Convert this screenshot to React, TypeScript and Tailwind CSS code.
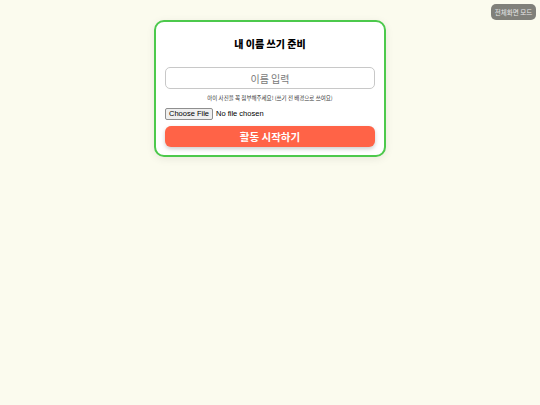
export default function App() {
  return (
    <div
      className="relative min-h-[405px] w-full bg-[#fbfbee] pt-[20px]"
      style={{ fontFamily: '"Noto Sans CJK KR", "Noto Sans", sans-serif' }}
    >
      <button className="absolute right-[4px] top-[4px] h-[16px] w-[45px] rounded-[5px] bg-[#80807a] text-[6.5px] leading-[9px] text-[#e8e8e8]">
        전체화면 모드
      </button>

      <div className="mx-auto w-[232px] rounded-[10px] border-2 border-[#4cc94c] bg-white px-[9px] pb-[8px] pt-[15px] shadow-[0_2px_8px_rgba(0,0,0,0.08)]">
        <h1 className="text-center text-[10px] font-black leading-[13px] text-black">내 이름 쓰기 준비</h1>

        <input
          type="text"
          placeholder="이름 입력"
          className="mt-[17px] block h-[22px] w-full rounded-[5px] border border-[#c8c8c8] text-center text-[10px] placeholder:text-[#7a7a7a]"
        />

        <p className="mt-[6px] text-center text-[5.5px] leading-[7px] text-[#333]">
          아이 사진을 꼭 첨부해주세요! (쓰기 전 배경으로 쓰여요)
        </p>

        <input
          type="file"
          className="mt-[6px] block text-[7.5px] leading-[10px] text-black file:mr-[3px] file:h-[12px] file:rounded-[2px] file:border file:border-solid file:border-[#8f8f8f] file:bg-[#efefef] file:px-[3px] file:text-[7.5px]"
          style={{ fontFamily: '"Liberation Sans", Arial, sans-serif' }}
        />

        <button className="mt-[6px] block h-[21px] w-full rounded-[6px] bg-[#ff6347] text-[10.5px] font-bold text-white shadow-[0_2px_4px_rgba(0,0,0,0.2)]">
          활동 시작하기
        </button>
      </div>
    </div>
  );
}
